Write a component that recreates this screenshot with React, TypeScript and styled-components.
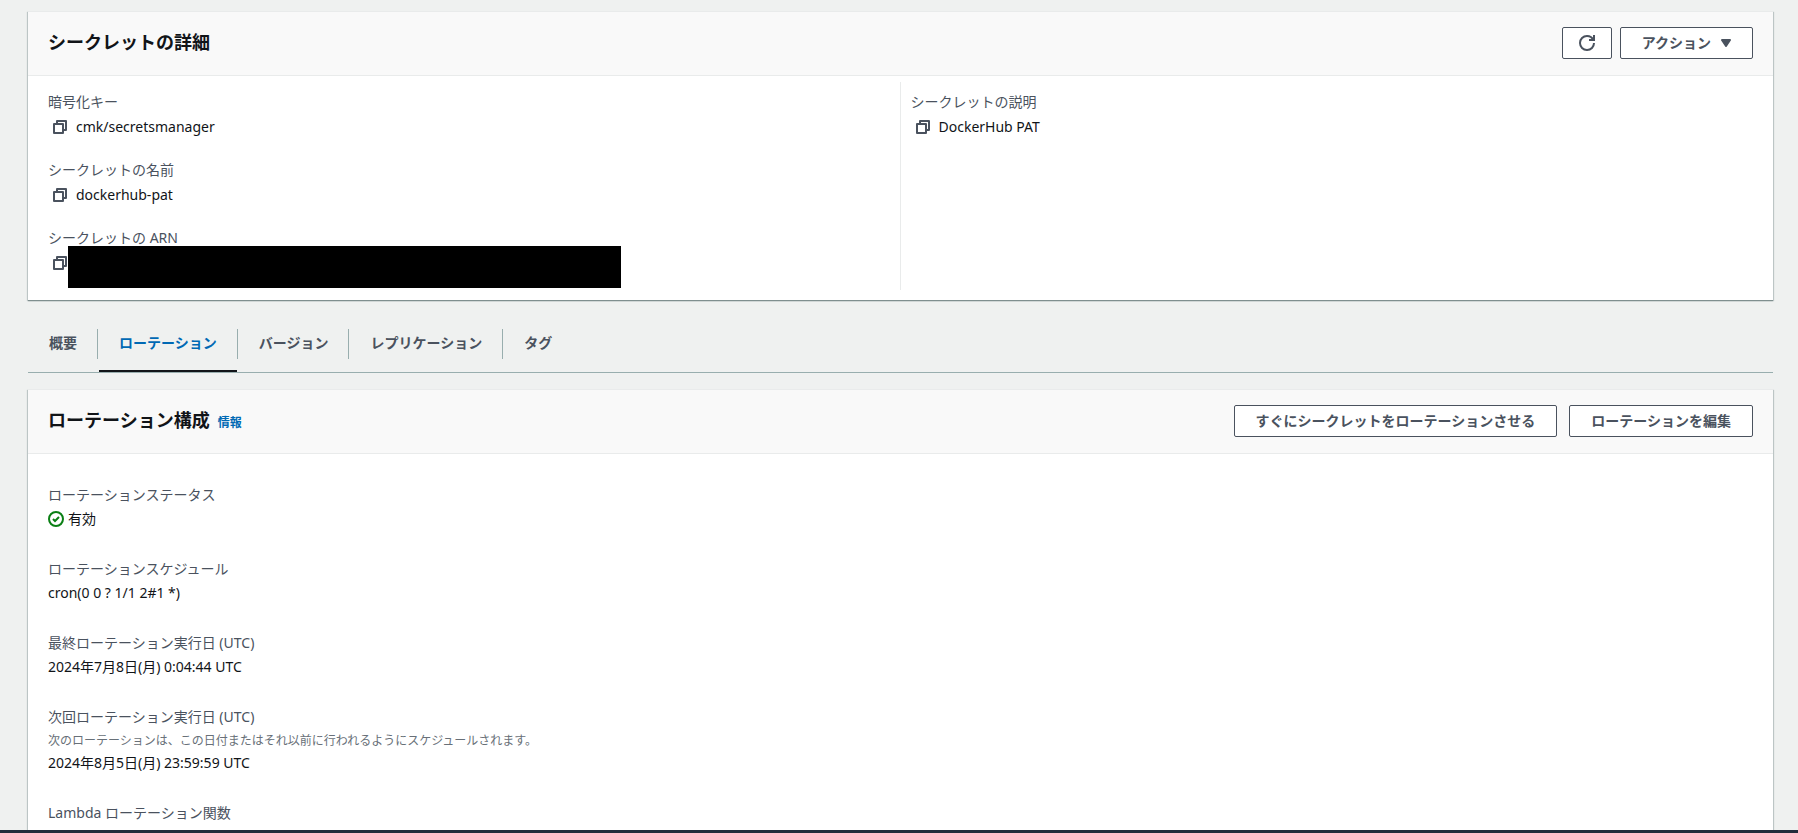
import React from 'react';
import styled, { createGlobalStyle, css } from 'styled-components';

const color = {
  page: '#eff1f0',
  header: '#f9f9f9',
  line: '#e9ebeb',
  text: '#111418',
  muted: '#4a525e',
  hint: '#687078',
  link: '#0069b4',
  rule: '#98aeae',
  ok: '#0a7f14',
};

const GlobalStyle = createGlobalStyle`
  * { box-sizing: border-box; }
  body {
    margin: 0;
    background: ${color.page};
    color: ${color.text};
    font: 400 14px/22px "Noto Sans", "Noto Sans CJK JP", sans-serif;
  }
  h2, dl, dd, p { margin: 0; }
`;

const Shell = styled.div`
  display: flex;
  flex-direction: column;
  height: 100vh;
`;

const Main = styled.main`
  flex: 1;
  min-height: 0;
  overflow-y: auto;
  scrollbar-width: none;
  padding: 11px 25px 0 28px;
`;

const FooterBar = styled.footer`
  flex: none;
  height: 3px;
  background: #222c3b;
`;

const Card = styled.section`
  background: #fff;
  border-top: 1px solid ${color.line};
  box-shadow: 0 1px 1px 0 #7f8f8f, 1px 1px 1px 0 #c9d0d0, -1px 1px 1px 0 #c9d0d0;
`;

const CardHeader = styled.header`
  display: flex;
  align-items: center;
  justify-content: space-between;
  gap: 20px;
  padding: 15px 20px 16px;
  background: ${color.header};
  border-bottom: 1px solid ${color.line};
`;

const Heading = styled.div`
  display: flex;
  align-items: baseline;
  gap: 8px;
  padding-bottom: 2px;
`;

const Title = styled.h2`
  font-size: 18px;
  line-height: 22px;
  font-weight: 700;
`;

const InfoLink = styled.a`
  color: ${color.link};
  font-size: 12px;
  line-height: 16px;
  font-weight: 700;
  text-decoration: none;
`;

const Actions = styled.div<{ $gap: number }>`
  display: flex;
  gap: ${(p) => p.$gap}px;
`;

const Button = styled.button<{ $icon?: boolean }>`
  display: flex;
  align-items: center;
  justify-content: center;
  gap: 10px;
  height: 32px;
  padding: 0 ${(p) => (p.$icon ? 16 : 21)}px;
  background: #fff;
  border: 1px solid ${color.muted};
  border-radius: 2px;
  color: ${color.muted};
  font: inherit;
  font-weight: 700;
  white-space: nowrap;
`;

const Columns = styled.div`
  display: grid;
  grid-template-columns: 1fr 1fr;
  padding: 6px 0 10px;
`;

const Column = styled.dl`
  display: flex;
  flex-direction: column;
  gap: 21px;
  padding: 9px 20px 16px;

  & + & {
    padding-left: 10px;
  }
  &:not(:last-child) {
    border-right: 1px solid ${color.line};
  }
`;

const Stack = styled.dl`
  display: flex;
  flex-direction: column;
  gap: 28px;
  padding: 30px 20px 20px;
`;

const Label = styled.dt`
  color: ${color.muted};
`;

const Value = styled.dd<{ $copy?: boolean }>`
  position: relative;
  display: flex;
  align-items: center;
  gap: 4px;
  min-height: 22px;
  margin-top: ${(p) => (p.$copy ? 3 : 2)}px;
`;

const Hint = styled.dd`
  margin-top: 2px;
  color: ${color.hint};
  font-size: 12px;
  line-height: 22px;
  && + dd { margin-top: 0; }
`;

const CopyButton = styled.button`
  display: flex;
  padding: 3px 4px;
  background: none;
  border: 0;
  color: ${color.muted};
`;

const Redaction = styled.span`
  position: absolute;
  top: -6px;
  left: 20px;
  width: 553px;
  height: 42px;
  background: #000;
`;

const TabBar = styled.nav`
  display: flex;
  margin: 28px 0 16px;
  border-bottom: 1px solid ${color.rule};
`;

const Tab = styled.a<{ $active?: boolean }>`
  position: relative;
  padding: 1px 0 13px;
  color: ${(p) => (p.$active ? color.link : color.muted)};
  font-weight: 700;
  text-decoration: none;

  span {
    display: block;
    padding: 0 20px;
    height: 30px;
    line-height: 28px;
    border: 0 solid transparent;
    border-width: 0 1px;
    border-right-color: ${color.rule};
  }
  &:last-child span { border-right-color: transparent; }

  ${(p) =>
    p.$active &&
    css`
      &::after {
        content: '';
        position: absolute;
        left: 1px;
        right: 1px;
        bottom: 0;
        height: 2px;
        background: ${color.text};
      }
    `}
`;

const CopyIcon = () => (
  <svg width="16" height="16" viewBox="0 0 16 16" fill="none" stroke="currentColor" strokeWidth="2" strokeLinejoin="round">
    <path d="M2 5h9v9H2z" />
    <path d="M5 5V2h9v9h-3" />
  </svg>
);

const RefreshIcon = () => (
  <svg width="16" height="16" viewBox="0 0 16 16" fill="none" stroke="currentColor" strokeWidth="2">
    <path d="M10 5h5V0" />
    <path d="M15 8a6.957 6.957 0 0 1-7 7 6.957 6.957 0 0 1-7-7 6.957 6.957 0 0 1 7-7 6.87 6.87 0 0 1 6.3 4" />
  </svg>
);

const CaretIcon = () => (
  <svg width="10" height="8" viewBox="0 0 10 8" fill="currentColor" stroke="currentColor" strokeWidth="2" strokeLinejoin="round">
    <path d="M1 1h8L5 7z" />
  </svg>
);

const StatusIcon = () => (
  <svg width="16" height="16" viewBox="0 0 16 16" fill="none" stroke={color.ok} strokeWidth="2">
    <circle cx="8" cy="8" r="7" />
    <path d="M5 8l2 2 4-4" />
  </svg>
);

type CopyFieldProps = { label: string; value?: string };

const CopyField = ({ label, value }: CopyFieldProps) => (
  <div>
    <Label>{label}</Label>
    <Value $copy>
      <CopyButton type="button" aria-label={`${label}をコピー`}>
        <CopyIcon />
      </CopyButton>
      {value ?? <Redaction />}
    </Value>
  </div>
);

type FieldProps = { label: string; hint?: string; children?: React.ReactNode };

const Field = ({ label, hint, children }: FieldProps) => (
  <div>
    <Label>{label}</Label>
    {hint && <Hint>{hint}</Hint>}
    {children && <Value>{children}</Value>}
  </div>
);

const tabs = ['概要', 'ローテーション', 'バージョン', 'レプリケーション', 'タグ'];

export default function App() {
  return (
    <Shell>
      <GlobalStyle />
      <Main>
        <Card>
          <CardHeader>
            <Heading>
              <Title>シークレットの詳細</Title>
            </Heading>
            <Actions $gap={8}>
              <Button type="button" $icon aria-label="更新">
                <RefreshIcon />
              </Button>
              <Button type="button">
                アクション
                <CaretIcon />
              </Button>
            </Actions>
          </CardHeader>
          <Columns>
            <Column>
              <CopyField label="暗号化キー" value="cmk/secretsmanager" />
              <CopyField label="シークレットの名前" value="dockerhub-pat" />
              <CopyField label="シークレットの ARN" />
            </Column>
            <Column>
              <CopyField label="シークレットの説明" value="DockerHub PAT" />
            </Column>
          </Columns>
        </Card>

        <TabBar>
          {tabs.map((name) => (
            <Tab key={name} href="#" $active={name === 'ローテーション'}>
              <span>{name}</span>
            </Tab>
          ))}
        </TabBar>

        <Card>
          <CardHeader>
            <Heading>
              <Title>ローテーション構成</Title>
              <InfoLink href="#">情報</InfoLink>
            </Heading>
            <Actions $gap={12}>
              <Button type="button">すぐにシークレットをローテーションさせる</Button>
              <Button type="button">ローテーションを編集</Button>
            </Actions>
          </CardHeader>
          <Stack>
            <Field label="ローテーションステータス">
              <StatusIcon />
              有効
            </Field>
            <Field label="ローテーションスケジュール">cron(0 0 ? 1/1 2#1 *)</Field>
            <Field label="最終ローテーション実行日 (UTC)">2024年7月8日(月) 0:04:44 UTC</Field>
            <Field
              label="次回ローテーション実行日 (UTC)"
              hint="次のローテーションは、この日付またはそれ以前に行われるようにスケジュールされます。"
            >
              2024年8月5日(月) 23:59:59 UTC
            </Field>
            <Field label="Lambda ローテーション関数" />
          </Stack>
        </Card>
      </Main>
      <FooterBar />
    </Shell>
  );
}
